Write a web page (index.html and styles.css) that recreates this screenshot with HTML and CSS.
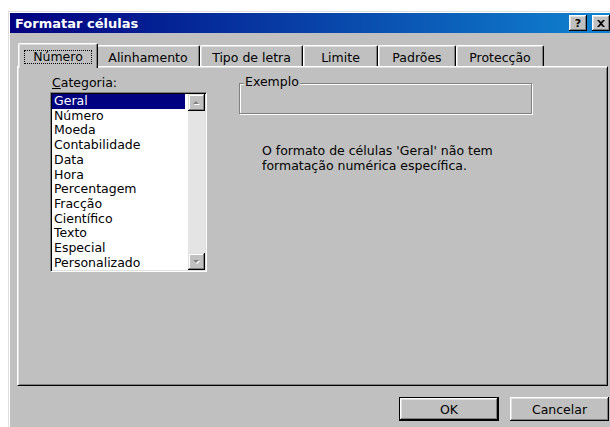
FILE: index.html
```html
<!DOCTYPE html>
<html lang="pt">
<head>
<meta charset="utf-8">
<title>Formatar células</title>
<link rel="stylesheet" href="styles.css">
</head>
<body>
<div class="window">
  <div class="titlebar">
    <span class="title">Formatar células</span>
    <div class="tb-buttons">
      <span class="tb-btn help">?</span>
      <span class="tb-btn close">
        <svg width="8" height="7" viewBox="0 0 8 7"><path d="M0 0h2l2 2 2-2h2L5 3.5 8 7H6L4 5 2 7H0l3-3.5z" fill="#000"/></svg>
      </span>
    </div>
  </div>

  <div class="dialog">
    <div class="tabs">
      <div class="tab active"><span class="focus">Número</span></div>
      <div class="tab">Alinhamento</div>
      <div class="tab">Tipo de letra</div>
      <div class="tab">Limite</div>
      <div class="tab">Padrões</div>
      <div class="tab">Protecção</div>
    </div>

    <div class="panel">
      <div class="cat-col">
        <div class="label"><u>C</u>ategoria:</div>
        <div class="listbox">
          <ul class="items">
            <li class="sel">Geral</li>
            <li>Número</li>
            <li>Moeda</li>
            <li>Contabilidade</li>
            <li>Data</li>
            <li>Hora</li>
            <li>Percentagem</li>
            <li>Fracção</li>
            <li>Científico</li>
            <li>Texto</li>
            <li>Especial</li>
            <li>Personalizado</li>
          </ul>
          <div class="vscroll">
            <span class="sb-btn">
              <svg width="9" height="6" viewBox="0 0 9 6"><path d="M2 5h6L5 2z" fill="#fff"/><path d="M1 4h6L4 1z" fill="#808080"/></svg>
            </span>
            <span class="sb-track"></span>
            <span class="sb-btn">
              <svg width="9" height="6" viewBox="0 0 9 6"><path d="M2 2h6L5 5z" fill="#fff"/><path d="M1 1h6L4 4z" fill="#808080"/></svg>
            </span>
          </div>
        </div>
      </div>

      <div class="info-col">
        <div class="groupbox"><span class="legend">Exemplo</span></div>
        <p class="desc">O formato de células 'Geral' não tem<br>formatação numérica específica.</p>
      </div>
    </div>

    <div class="actions">
      <button class="btn default">OK</button>
      <button class="btn cancel">Cancelar</button>
    </div>
  </div>
</div>
</body>
</html>
```

FILE: styles.css
```css
html, body {
  margin: 0;
  width: 610px;
  height: 427px;
  overflow: hidden;
  background: #fff;
}

body {
  font-family: "DejaVu Sans", "Liberation Sans", sans-serif;
  font-size: 12.5px;
  color: #000;
}

/* window frame */
.window {
  margin: 11px 0 0 8px;
  width: 606px;
  height: 430px;
  box-sizing: border-box;
  background: #c0c0c0;
  border-top: 1px solid #dfdfdf;
  border-left: 1px solid #dfdfdf;
  padding: 1px 0 0 1px;
  box-shadow: inset 1px 1px #fff;
}

/* caption */
.titlebar {
  height: 20px;
  display: flex;
  align-items: center;
  justify-content: space-between;
  padding: 0 4px 0 5px;
  background: linear-gradient(to right, #000080, #1084d0);
  color: #fff;
  font-size: 13px;
  font-weight: bold;
}

.tb-buttons {
  display: flex;
  gap: 5px;
}

.tb-btn {
  width: 18px;
  height: 16px;
  box-sizing: border-box;
  display: flex;
  align-items: center;
  justify-content: center;
  background: #c0c0c0;
  color: #000;
  font-size: 11px;
  font-weight: bold;
  box-shadow: inset -1px -1px #000, inset 1px 1px #fff, inset -2px -2px #808080, inset 2px 2px #dfdfdf;
}

/* dialog body */
.dialog {
  padding: 10px 5px 0 7px;
}

.tabs {
  display: flex;
  align-items: flex-end;
  height: 23px;
  padding-left: 3px;
  position: relative;
  z-index: 1;
}

.tab {
  height: 21px;
  box-sizing: border-box;
  display: flex;
  align-items: center;
  justify-content: center;
  padding-top: 3px;
  border-top: 1px solid #fff;
  border-left: 1px solid #fff;
  border-right: 1px solid #000;
  border-radius: 2px 2px 0 0;
  box-shadow: inset -1px 0 #808080, inset 1px 1px #dfdfdf;
  background: #c0c0c0;
  white-space: nowrap;
}

.tab:nth-child(1) { width: 76px; }
.tab:nth-child(2) { width: 104px; }
.tab:nth-child(3) { width: 103px; }
.tab:nth-child(4) { width: 75px; }
.tab:nth-child(5) { width: 78px; }
.tab:nth-child(6) { width: 88px; }

.tab.active {
  width: 80px;
  height: 25px;
  margin: 0 -2px -2px -2px;
  padding-top: 1px;
  position: relative;
  z-index: 2;
}

.focus {
  padding: 0 8px;
  line-height: 12px;
  outline: 1px dotted #000;
}

.panel {
  width: 591px;
  height: 320px;
  box-sizing: border-box;
  display: flex;
  align-items: flex-start;
  padding: 8px 0 0 32px;
  border: 1px solid;
  border-color: #fff #000 #000 #fff;
  box-shadow: inset 1px 1px #dfdfdf, inset -1px -1px #808080;
}

/* category list */
.cat-col {
  width: 157px;
  display: flex;
  flex-direction: column;
}

.label {
  line-height: 15px;
  padding-left: 2px;
  margin-bottom: 2px;
}

.listbox {
  height: 180px;
  box-sizing: border-box;
  display: flex;
  padding: 1px;
  background: #fff;
  border: 1px solid;
  border-color: #808080 #fff #fff #808080;
  box-shadow: inset 1px 1px #000, inset -1px -1px #dfdfdf;
}

.items {
  flex: 1;
  margin: 0 3px 0 0;
  padding: 0;
  list-style: none;
}

.items li {
  line-height: 14.7px;
  padding-left: 2px;
  white-space: nowrap;
}

.items li.sel {
  background: #000080;
  color: #fff;
}

.vscroll {
  width: 17px;
  display: flex;
  flex-direction: column;
}

.sb-btn {
  height: 17px;
  box-sizing: border-box;
  display: flex;
  align-items: center;
  justify-content: center;
  background: #c0c0c0;
  box-shadow: inset -1px -1px #000, inset 1px 1px #dfdfdf, inset -2px -2px #808080, inset 2px 2px #fff;
}

.sb-track {
  flex: 1;
  background: #e4e4e4;
}

/* sample and description */
.info-col {
  margin-left: 32px;
}

.groupbox {
  position: relative;
  width: 293px;
  height: 31px;
  margin-top: 8px;
  box-sizing: border-box;
  border: 1px solid #808080;
  box-shadow: 1px 1px #fff, inset 1px 1px #fff;
}

.legend {
  position: absolute;
  top: -9px;
  left: 4px;
  padding: 0 1px;
  line-height: 14px;
  background: #c0c0c0;
}

.desc {
  margin: 29px 0 0 23px;
  line-height: 15px;
  white-space: nowrap;
}

/* OK / Cancel */
.actions {
  width: 592px;
  display: flex;
  justify-content: flex-end;
  gap: 11px;
  margin-top: 11px;
}

.btn {
  height: 24px;
  padding: 0;
  border: none;
  font: inherit;
  color: #000;
  background: #c0c0c0;
  box-shadow: inset -1px -1px #000, inset 1px 1px #fff, inset -2px -2px #808080, inset 2px 2px #dfdfdf;
}

.btn.default {
  width: 100px;
  border: 1px solid #000;
}

.btn.cancel {
  width: 99px;
}
```
